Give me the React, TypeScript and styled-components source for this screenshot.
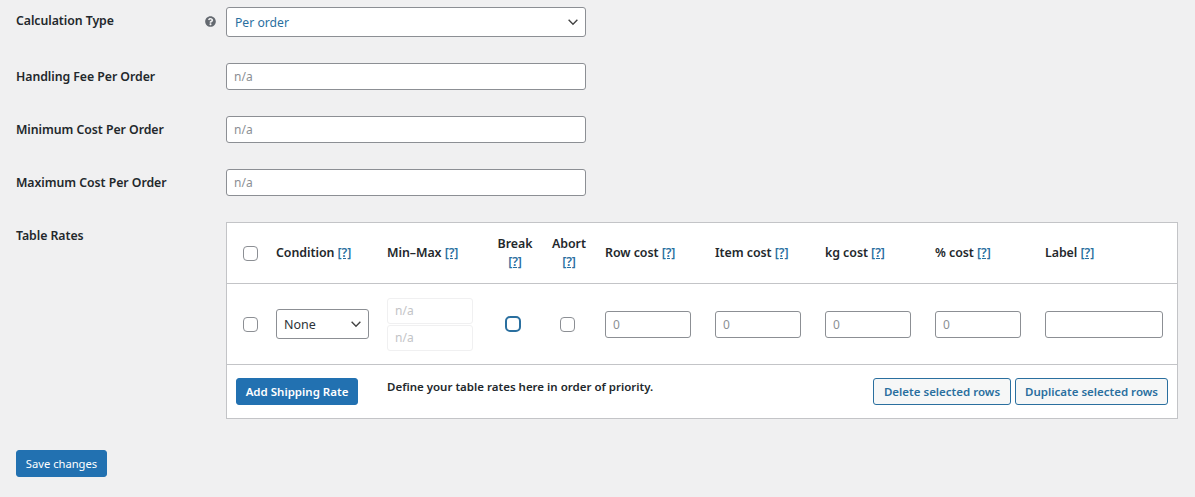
import { createGlobalStyle, styled } from "styled-components";
import { FaQuestionCircle } from "react-icons/fa";

const chevron =
  "url(\"data:image/svg+xml,%3Csvg xmlns='http://www.w3.org/2000/svg' viewBox='0 0 16 16'%3E%3Cpath d='M3 5.5l5 5 5-5' fill='none' stroke='%23444' stroke-width='1.6'/%3E%3C/svg%3E\")";

const GlobalStyle = createGlobalStyle`
  html, body {
    margin: 0;
    background: #f0f0f1;
    font-family: "Noto Sans", "Open Sans", sans-serif;
    font-size: 13px;
    color: #1d2327;
  }
`;

const Page = styled.form`
  width: 1195px;
  height: 497px;
  box-sizing: border-box;
  padding: 7px 0 0 16px;
  overflow: hidden;
`;

const Rows = styled.div`
  display: flex;
  flex-direction: column;
  gap: 26px;
`;

const Row = styled.div`
  display: flex;
  align-items: flex-start;
`;

const Label = styled.div`
  width: 210px;
  flex: none;
  box-sizing: border-box;
  padding: 4px 10px 0 0;
  display: flex;
  justify-content: space-between;
  align-items: center;
  font-size: 12.3px;
  font-weight: 600;
  line-height: 20px;
  letter-spacing: -0.05px;
  color: #23282c;
`;

const HelpIcon = styled(FaQuestionCircle)`
  width: 11px;
  height: 11px;
  color: #646970;
`;

const Select = styled.select<{ $active?: boolean }>`
  appearance: none;
  box-sizing: border-box;
  display: block;
  margin: 0;
  width: ${(p) => (p.$active ? "360px" : "93px")};
  height: 30px;
  padding: 0 24px 0 ${(p) => (p.$active ? "8px" : "7px")};
  border: 1px solid #8c8f94;
  border-radius: 3px;
  background: #fff ${chevron} no-repeat right 5px center / 14px 14px;
  color: ${(p) => (p.$active ? "#2a6f9f" : "#2c3338")};
  font: ${(p) => (p.$active ? 12.2 : 12.5)}px "Noto Sans", sans-serif;
`;

const TextInput = styled.input<{ $width?: number; $faint?: boolean }>`
  box-sizing: border-box;
  display: block;
  margin: 0;
  width: ${(p) => p.$width ?? 360}px;
  height: ${(p) => (p.$faint ? 26 : 27)}px;
  padding: 0 7px;
  border: 1px solid ${(p) => (p.$faint ? "#f0f0f1" : "#8c8f94")};
  border-radius: 3px;
  background: #fff;
  font: 12px "Noto Sans", sans-serif;
  &::placeholder {
    color: ${(p) => (p.$faint ? "#c3c4c7" : "#8c8f94")};
    opacity: 1;
  }
`;

const RatesTable = styled.table`
  width: 952px;
  box-sizing: border-box;
  table-layout: fixed;
  border-collapse: separate;
  border-spacing: 0;
  border: 1px solid #c3c4c7;
  background: #fff;
`;

const HeadCell = styled.th<{ $center?: boolean }>`
  height: 61px;
  box-sizing: border-box;
  padding: 0 0 0 ${(p) => (p.$center ? "0" : "10px")};
  border-bottom: 1px solid #c3c4c7;
  text-align: ${(p) => (p.$center ? "center" : "left")};
  font-size: 12.4px;
  font-weight: 600;
  line-height: 18px;
  letter-spacing: -0.05px;
  color: #23282c;
`;

const HelpLink = styled.a`
  color: #2a6f9f;
`;

const BodyCell = styled.td<{ $center?: boolean }>`
  height: 81px;
  box-sizing: border-box;
  padding: 0 0 0 ${(p) => (p.$center ? "0" : "10px")};
  border-bottom: 1px solid #c3c4c7;
  text-align: ${(p) => (p.$center ? "center" : "left")};
  vertical-align: middle;
`;

const CheckCell = styled.div`
  display: flex;
  justify-content: center;
  padding-right: 4px;
`;

const FirstCheck = styled.div`
  padding-left: 16px;
  display: flex;
`;

const Check = styled.span<{ $focused?: boolean }>`
  display: block;
  box-sizing: border-box;
  width: ${(p) => (p.$focused ? 16 : 15)}px;
  height: ${(p) => (p.$focused ? 16 : 15)}px;
  border: ${(p) => (p.$focused ? "2px solid #2a6f9f" : "1px solid #8c8f94")};
  border-radius: ${(p) => (p.$focused ? 5 : 4)}px;
  background: #fff;
`;

const Stack = styled.div`
  display: flex;
  flex-direction: column;
  gap: 1px;
`;

const Foot = styled.div`
  height: 53px;
  box-sizing: border-box;
  padding: 13px 9px 0;
  display: flex;
  align-items: flex-start;
`;

const Note = styled.p`
  margin: 0 0 0 29px;
  font-size: 11.5px;
  font-weight: 600;
  line-height: 18px;
  color: #23282c;
`;

const Actions = styled.div`
  margin-left: auto;
  display: flex;
  gap: 4px;
`;

const Button = styled.button<{ $secondary?: boolean; $width: number; $plain?: boolean }>`
  box-sizing: border-box;
  width: ${(p) => p.$width}px;
  height: 27px;
  padding: 0;
  border: 1px solid ${(p) => (p.$secondary ? "#2a6f9f" : "#2271b1")};
  border-radius: 3px;
  background: ${(p) => (p.$secondary ? "#f6f7f7" : "#2271b1")};
  color: ${(p) => (p.$secondary ? "#2a6f9f" : "#fff")};
  font: ${(p) => (p.$plain ? "400 11.2px" : "600 11.5px")} "Noto Sans", sans-serif;
`;

const SaveBar = styled.div`
  margin-top: 31px;
`;

const columns = [39, 111, 110, 56, 52, 110, 110, 110, 110, 142];

function Help() {
  return <HelpLink href="#">[?]</HelpLink>;
}

export default function App() {
  return (
    <Page onSubmit={(e) => e.preventDefault()}>
      <GlobalStyle />
      <Rows>
        <Row>
          <Label>
            Calculation Type
            <HelpIcon />
          </Label>
          <Select $active defaultValue="order">
            <option value="order">Per order</option>
          </Select>
        </Row>
        <Row>
          <Label>Handling Fee Per Order</Label>
          <TextInput placeholder="n/a" />
        </Row>
        <Row>
          <Label>Minimum Cost Per Order</Label>
          <TextInput placeholder="n/a" />
        </Row>
        <Row>
          <Label>Maximum Cost Per Order</Label>
          <TextInput placeholder="n/a" />
        </Row>
        <Row>
          <Label>Table Rates</Label>
          <RatesTable>
            <colgroup>
              {columns.map((w, i) => (
                <col key={i} width={w} />
              ))}
            </colgroup>
            <thead>
              <tr>
                <HeadCell $center>
                  <FirstCheck>
                    <Check />
                  </FirstCheck>
                </HeadCell>
                <HeadCell>
                  Condition <Help />
                </HeadCell>
                <HeadCell>
                  Min–Max <Help />
                </HeadCell>
                <HeadCell $center>
                  Break
                  <br />
                  <Help />
                </HeadCell>
                <HeadCell $center>
                  Abort
                  <br />
                  <Help />
                </HeadCell>
                <HeadCell>
                  Row cost <Help />
                </HeadCell>
                <HeadCell>
                  Item cost <Help />
                </HeadCell>
                <HeadCell>
                  kg cost <Help />
                </HeadCell>
                <HeadCell>
                  % cost <Help />
                </HeadCell>
                <HeadCell>
                  Label <Help />
                </HeadCell>
              </tr>
            </thead>
            <tbody>
              <tr>
                <BodyCell $center>
                  <FirstCheck>
                    <Check />
                  </FirstCheck>
                </BodyCell>
                <BodyCell>
                  <Select defaultValue="none">
                    <option value="none">None</option>
                  </Select>
                </BodyCell>
                <BodyCell>
                  <Stack>
                    <TextInput $faint $width={86} placeholder="n/a" />
                    <TextInput $faint $width={86} placeholder="n/a" />
                  </Stack>
                </BodyCell>
                <BodyCell $center>
                  <CheckCell>
                    <Check $focused />
                  </CheckCell>
                </BodyCell>
                <BodyCell $center>
                  <CheckCell>
                    <Check />
                  </CheckCell>
                </BodyCell>
                <BodyCell>
                  <TextInput $width={86} placeholder="0" />
                </BodyCell>
                <BodyCell>
                  <TextInput $width={86} placeholder="0" />
                </BodyCell>
                <BodyCell>
                  <TextInput $width={86} placeholder="0" />
                </BodyCell>
                <BodyCell>
                  <TextInput $width={86} placeholder="0" />
                </BodyCell>
                <BodyCell>
                  <TextInput $width={118} />
                </BodyCell>
              </tr>
            </tbody>
            <tfoot>
              <tr>
                <td colSpan={10} style={{ padding: 0 }}>
                  <Foot>
                    <Button type="button" $width={122}>
                      Add Shipping Rate
                    </Button>
                    <Note>Define your table rates here in order of priority.</Note>
                    <Actions>
                      <Button type="button" $secondary $width={138}>
                        Delete selected rows
                      </Button>
                      <Button type="button" $secondary $width={153}>
                        Duplicate selected rows
                      </Button>
                    </Actions>
                  </Foot>
                </td>
              </tr>
            </tfoot>
          </RatesTable>
        </Row>
      </Rows>
      <SaveBar>
        <Button $width={91} $plain>
          Save changes
        </Button>
      </SaveBar>
    </Page>
  );
}
